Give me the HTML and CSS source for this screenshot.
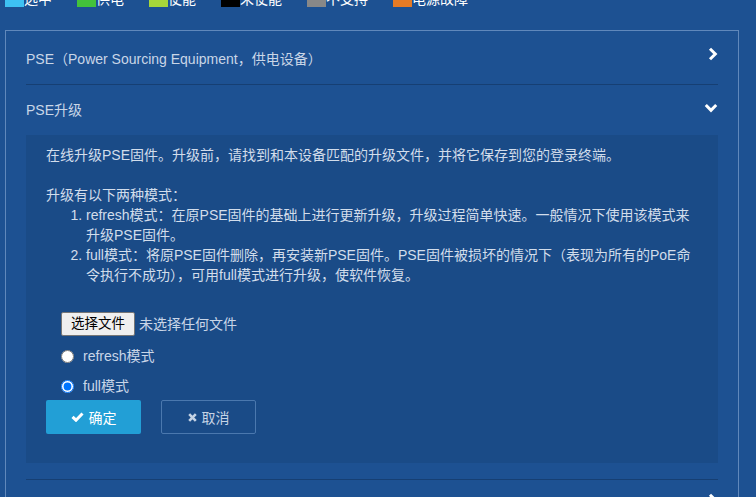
FILE: index.html
```html
<!DOCTYPE html>
<html>
<head>
<meta charset="utf-8">
<link rel="stylesheet" href="styles.css">
</head>
<body>
<div class="legend">
  <span class="lg"><i class="sw sw-sel"></i>选中</span>
  <span class="lg"><i class="sw sw-pwr"></i>供电</span>
  <span class="lg"><i class="sw sw-en"></i>使能</span>
  <span class="lg"><i class="sw sw-dis"></i>未使能</span>
  <span class="lg"><i class="sw sw-ns"></i>不支持</span>
  <span class="lg"><i class="sw sw-err"></i>电源故障</span>
</div>
<div class="panel">
  <div class="item">
    <div class="hd">
      <span class="title">PSE（Power Sourcing Equipment，供电设备）</span>
      <svg class="chev-r" width="10" height="14" viewBox="0 0 10 14"><polyline points="2,1.8 7.3,7 2,12.2" fill="none" stroke="#fff" stroke-width="3"/></svg>
    </div>
  </div>
  <div class="item">
    <div class="hd">
      <span class="title">PSE升级</span>
      <svg class="chev-d" width="14" height="10" viewBox="0 0 14 10"><polyline points="1.8,2 7,7.3 12.2,2" fill="none" stroke="#fff" stroke-width="3"/></svg>
    </div>
    <div class="bd">
      <p class="para">在线升级PSE固件。升级前，请找到和本设备匹配的升级文件，并将它保存到您的登录终端。</p>
      <p class="para mt">升级有以下两种模式：</p>
      <ol class="modes">
        <li>refresh模式：在原PSE固件的基础上进行更新升级，升级过程简单快速。一般情况下使用该模式来升级PSE固件。</li>
        <li>full模式：将原PSE固件删除，再安装新PSE固件。PSE固件被损坏的情况下（表现为所有的PoE命令执行不成功），可用full模式进行升级，使软件恢复。</li>
      </ol>
      <div class="file"><span class="fbtn">选择文件</span><span class="fname">未选择任何文件</span></div>
      <label class="radio"><input type="radio" name="mode">refresh模式</label>
      <label class="radio"><input type="radio" name="mode" checked>full模式</label>
      <div class="btns">
        <button class="btn ok"><svg width="13" height="10" viewBox="0 0 13 10"><polyline points="1.5,4.8 5,8.2 11.5,1.5" fill="none" stroke="#fff" stroke-width="3"/></svg>确定</button>
        <button class="btn cancel"><svg width="9" height="9" viewBox="0 0 9 9"><path d="M1.2 1.2L7.8 7.8M7.8 1.2L1.2 7.8" stroke="#c5d3e5" stroke-width="2.6"/></svg>取消</button>
      </div>
    </div>
  </div>
  <div class="item">
    <div class="hd">
      <span class="title"></span>
      <svg class="chev-r" width="10" height="14" viewBox="0 0 10 14"><polyline points="2,1.8 7.3,7 2,12.2" fill="none" stroke="#fff" stroke-width="3"/></svg>
    </div>
  </div>
</div>
</body>
</html>
```

FILE: styles.css
```css
* { box-sizing: border-box; }
html, body { margin: 0; height: 100%; }
body {
  background: #1d5192;
  font-family: "Liberation Sans", "Noto Sans CJK SC", sans-serif;
  font-size: 14px;
  color: #cfdaea;
  overflow: hidden;
}
.legend {
  display: flex;
  align-items: flex-end;
  height: 19px;
  margin: -12px 0 0 5px;
}
.lg {
  display: flex;
  align-items: flex-end;
  margin-right: 25px;
  color: #fff;
  line-height: 16px;
}
.sw { display: block; width: 19px; height: 19px; }
.sw-sel { background: #3ec2f3; }
.sw-pwr { background: #43c23b; }
.sw-en { background: #a6d63a; }
.sw-dis { background: #000; }
.sw-ns { background: #888888; }
.sw-err { background: #e67b25; }

.panel {
  margin: 23px 0 0 5px;
  width: 734px;
  border: 1px solid #6088bb;
  padding: 3px 20px 0;
}
.item { border-bottom: 1px solid #163f73; }
.hd {
  height: 50px;
  display: flex;
  align-items: center;
  justify-content: space-between;
}
.title { color: #c9d6e7; line-height: 20px; }
.chev-r { align-self: flex-start; margin-top: 13px; }
.chev-d { align-self: flex-start; margin-top: 18px; }

.bd {
  background: #1a4b87;
  margin-bottom: 16px;
  padding: 10px 20px 29px;
  line-height: 20px;
  color: #d2ddeb;
}
.para { margin: 0; }
.mt { margin-top: 20px; }
.modes { margin: 0; padding-left: 40px; }

.file {
  display: flex;
  align-items: center;
  margin-top: 27px;
  padding-left: 15px;
  height: 24px;
}
.fbtn {
  display: inline-flex;
  align-items: center;
  height: 24px;
  padding: 0 9px;
  background: #efefef;
  border: 1px solid #767676;
  border-radius: 2px;
  color: #000;
  font-size: 13.5px;
}
.fname { margin-left: 4px; color: #c9d6e7; }

.radio {
  display: flex;
  align-items: center;
  height: 20px;
  margin-top: 10px;
  padding-left: 15px;
  color: #c9d6e7;
}
.radio input { width: 13px; height: 13px; margin: 0 9px 0 0; }

.btns { display: flex; gap: 20px; margin-top: 4px; }
.btn {
  width: 95px;
  height: 34px;
  display: flex;
  align-items: center;
  justify-content: center;
  gap: 5px;
  font-family: inherit;
  font-size: 14px;
  border-radius: 2px;
  padding: 0;
}
.ok { background: #229fd6; color: #fff; border: none; }
.cancel { background: transparent; border: 1px solid #4b78ae; color: #c5d3e5; }
```
